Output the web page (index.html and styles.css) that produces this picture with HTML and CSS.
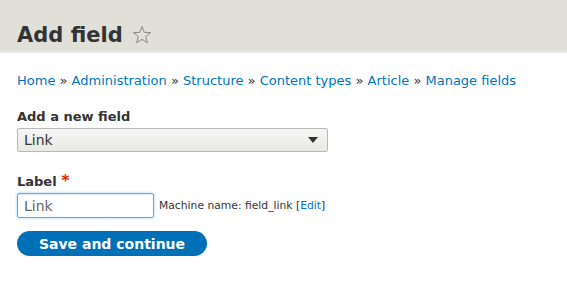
FILE: index.html
```html
<!DOCTYPE html>
<html>
<head>
<meta charset="utf-8">
<link rel="stylesheet" href="styles.css">
</head>
<body>
<header class="page-head">
  <h1 class="page-title">Add field <svg class="star" width="20" height="20" viewBox="0 0 20 20"><polygon points="10,1.5 12.3,7.4 18.6,7.6 13.7,11.6 15.4,17.8 10,14.3 4.6,17.8 6.3,11.6 1.4,7.6 7.7,7.4" fill="none" stroke="#8a8a86" stroke-width="1"/></svg></h1>
</header>
<main class="content">
  <nav class="breadcrumb">
    <a href="#">Home</a> » <a href="#">Administration</a> » <a href="#">Structure</a> » <a href="#">Content types</a> » <a href="#">Article</a> » <a href="#">Manage fields</a>
  </nav>
  <div class="form-item">
    <label class="form-label">Add a new field</label>
    <div class="select">
      <span>Link</span>
      <span class="arrow"></span>
    </div>
  </div>
  <div class="form-item">
    <label class="form-label">Label <span class="req">*</span></label>
    <div class="row">
      <div class="input">Link</div>
      <span class="machine">Machine name: field_link [<a href="#">Edit</a>]</span>
    </div>
  </div>
  <button class="btn">Save and continue</button>
</main>
</body>
</html>
```
FILE: styles.css
```css
html, body { margin: 0; padding: 0; }
body {
  font-family: "DejaVu Sans", sans-serif;
  color: #333;
  background: #fff;
}
.page-head {
  background: #e0e0d8;
  border-bottom: 2px solid #ebebe6;
  height: 51px;
  box-sizing: content-box;
}
.page-title {
  margin: 0;
  padding: 21px 0 0 17px;
  font-size: 21px;
  line-height: 28px;
  font-weight: 700;
  color: #333;
  display: flex;
  align-items: center;
  gap: 9px;
}
.star { display: block; }
.content { padding: 18px 17px 0 17px; }
.breadcrumb {
  font-size: 13px;
  line-height: 20px;
  color: #333;
}
.breadcrumb a, .machine a { color: #0074bd; text-decoration: none; }
.form-item { margin-top: 17px; }
.form-item + .form-item { margin-top: 21px; }
.form-label {
  display: block;
  font-size: 13px;
  font-weight: 700;
  line-height: 18px;
  margin-bottom: 2px;
}
.req { color: #e32700; font-size: 16px; line-height: 0; }
.select {
  width: 311px;
  height: 24px;
  box-sizing: border-box;
  border: 1px solid #b8b8b8;
  border-radius: 2px;
  background: linear-gradient(#f6f6f4, #e8e8e4);
  display: flex;
  align-items: center;
  justify-content: space-between;
  padding: 0 6px 0 6px;
  font-size: 14px;
  color: #333;
}
.arrow {
  width: 0; height: 0;
  border-left: 5px solid transparent;
  border-right: 5px solid transparent;
  border-top: 6px solid #333;
  margin-right: 3px;
}
.row { display: flex; align-items: center; gap: 5px; }
.input {
  width: 137px;
  height: 25px;
  box-sizing: border-box;
  border: 1px solid #40b6ff;
  border-radius: 2px;
  box-shadow: 0 0 3px 0 rgba(64,182,255,0.6), inset 0 1px 2px rgba(0,0,0,0.1);
  padding: 0 6px;
  display: flex;
  align-items: center;
  font-size: 14px;
  color: #666;
}
.machine { font-size: 10.75px; color: #333; }
.btn {
  margin-top: 13px;
  width: 190px;
  height: 25px;
  border: 0;
  border-radius: 13px;
  background: #0071b8;
  color: #fff;
  font-family: "DejaVu Sans", sans-serif;
  font-weight: 700;
  font-size: 14px;
  padding: 0;
  display: block;
}
```
